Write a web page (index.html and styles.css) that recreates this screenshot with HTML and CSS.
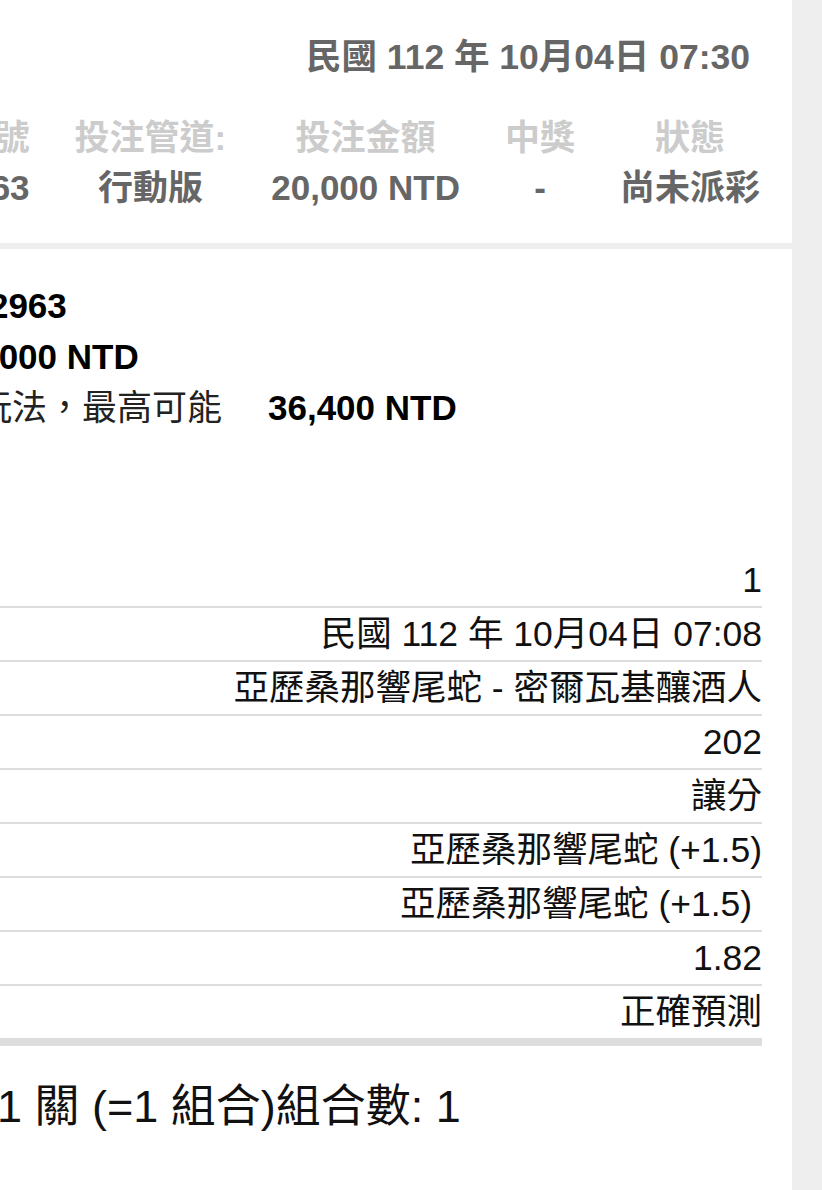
FILE: index.html
```html
<!DOCTYPE html>
<html lang="zh-Hant">
<head>
<meta charset="utf-8">
<title>注單明細</title>
<link rel="stylesheet" href="styles.css">
</head>
<body>
<div class="sheet">
  <header class="head">
    <div class="date">民國 112 年 10月04日 07:30</div>
    <div class="cols">
      <div class="col col-id"><span class="lbl">注單號</span><span class="val">522963</span></div>
      <div class="col"><span class="lbl">投注管道:</span><span class="val">行動版</span></div>
      <div class="col"><span class="lbl">投注金額</span><span class="val">20,000 NTD</span></div>
      <div class="col"><span class="lbl">中獎</span><span class="val">-</span></div>
      <div class="col"><span class="lbl">狀態</span><span class="val">尚未派彩</span></div>
    </div>
  </header>
  <main class="main">
    <div class="info">
      <div class="line"><span class="k">注單號:</span><span class="v">522963</span></div>
      <div class="line"><span class="k">投注金額:</span><span class="v">20,000 NTD</span></div>
      <div class="line"><span class="k k-long">所選玩法，最高可能</span><span class="v v-gap">36,400 NTD</span></div>
    </div>
    <div class="table">
      <div class="row">1</div>
      <div class="row">民國 112 年 10月04日 07:08</div>
      <div class="row">亞歷桑那響尾蛇 - 密爾瓦基釀酒人</div>
      <div class="row">202</div>
      <div class="row">讓分</div>
      <div class="row">亞歷桑那響尾蛇 (+1.5)</div>
      <div class="row">亞歷桑那響尾蛇 (+1.5)&nbsp;</div>
      <div class="row">1.82</div>
      <div class="row">正確預測</div>
    </div>
    <div class="combo">1 串 1 關 (=1 組合)組合數: 1</div>
  </main>
</div>
</body>
</html>
```
FILE: styles.css
```css
html, body {
  margin: 0;
  padding: 0;
}
body {
  background: #eeeeee;
  overflow-x: hidden;
  font-family: "Liberation Sans", "Noto Sans CJK TC", sans-serif;
}
.sheet {
  margin-left: -200px;
  width: 992px;
}
.head {
  background: #ffffff;
  padding: 32px 32px 30px 0;
}
.date {
  text-align: right;
  font-weight: bold;
  color: #666666;
  font-size: 35.5px;
  line-height: 50px;
  margin-right: 10px;
}
.cols {
  display: flex;
  justify-content: flex-end;
  gap: 45px;
  margin-top: 31px;
}
.col {
  display: flex;
  flex-direction: column;
  align-items: center;
  font-size: 35px;
  line-height: 50px;
  font-weight: bold;
}
.col-id {
  align-items: flex-end;
}
.lbl {
  color: #cccccc;
}
.val {
  color: #666666;
}
.main {
  background: #ffffff;
  margin-top: 6px;
  padding: 31px 30px 80px 0;
}
.line {
  display: flex;
  font-size: 35px;
  line-height: 51px;
  color: #000000;
  white-space: nowrap;
}
.k {
  flex: none;
  width: 150px;
  color: #222222;
}
.k-long {
  width: 422px;
  text-align: right;
}
.v {
  font-weight: bold;
}
.v-gap {
  margin-left: 46px;
}
.table {
  margin-top: 121px;
}
.row {
  height: 52px;
  line-height: 52px;
  border-bottom: 2px solid #dddddd;
  text-align: right;
  font-size: 35.5px;
  color: #111111;
  white-space: nowrap;
}
.row:last-child {
  border-bottom-width: 8px;
}
.combo {
  margin-top: 31px;
  padding-left: 102px;
  font-size: 45px;
  line-height: 60px;
  color: #111111;
  white-space: nowrap;
}
```
